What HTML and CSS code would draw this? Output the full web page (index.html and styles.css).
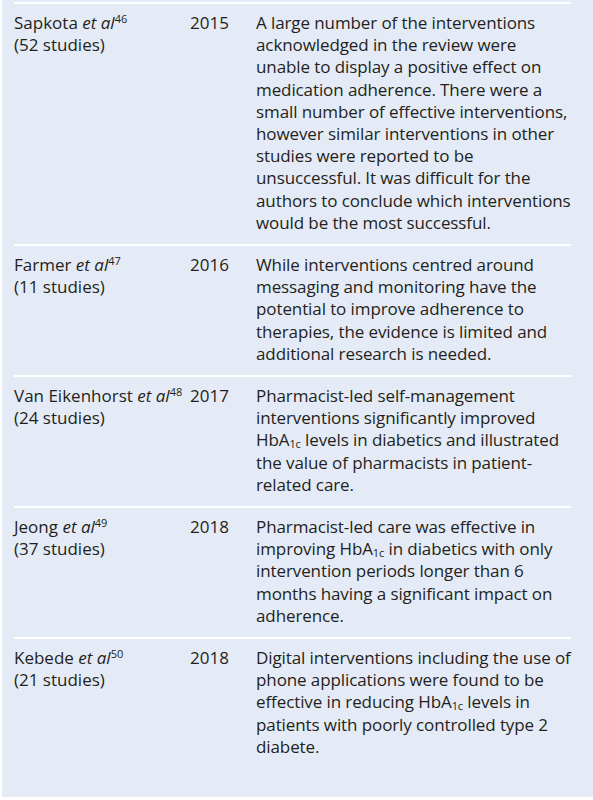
FILE: index.html
```html
<!DOCTYPE html>
<html lang="en">
<head>
    <meta charset="UTF-8">
    <title>Adherence interventions</title>
    <link rel="stylesheet" href="styles.css">
</head>
<body>
    <div class="panel">
        <div class="row">
            <div class="study">Sapkota <i>et al</i><sup>46</sup><br>(52 studies)</div>
            <div class="year">2015</div>
            <div class="finding">A large number of the interventions<br>acknowledged in the review were<br>unable to display a positive effect on<br>medication adherence. There were a<br>small number of effective interventions,<br>however similar interventions in other<br>studies were reported to be<br>unsuccessful. It was difficult for the<br>authors to conclude which interventions<br>would be the most successful.</div>
        </div>
        <div class="row">
            <div class="study">Farmer <i>et al</i><sup>47</sup><br>(11 studies)</div>
            <div class="year">2016</div>
            <div class="finding">While interventions centred around<br>messaging and monitoring have the<br>potential to improve adherence to<br>therapies, the evidence is limited and<br>additional research is needed.</div>
        </div>
        <div class="row">
            <div class="study">Van Eikenhorst <i>et al</i><sup>48</sup><br>(24 studies)</div>
            <div class="year">2017</div>
            <div class="finding">Pharmacist-led self-management<br>interventions significantly improved<br>HbA<sub>1c</sub> levels in diabetics and illustrated<br>the value of pharmacists in patient-<br>related care.</div>
        </div>
        <div class="row">
            <div class="study">Jeong <i>et al</i><sup>49</sup><br>(37 studies)</div>
            <div class="year">2018</div>
            <div class="finding">Pharmacist-led care was effective in<br>improving HbA<sub>1c</sub> in diabetics with only<br>intervention periods longer than 6<br>months having a significant impact on<br>adherence.</div>
        </div>
        <div class="row last">
            <div class="study">Kebede <i>et al</i><sup>50</sup><br>(21 studies)</div>
            <div class="year">2018</div>
            <div class="finding">Digital interventions including the use of<br>phone applications were found to be<br>effective in reducing HbA<sub>1c</sub> levels in<br>patients with poorly controlled type 2<br>diabete.</div>
        </div>
    </div>
</body>
</html>
```

FILE: styles.css
```css
/* Tabelle im Kasten */

body {
    margin: 0;
    background-color: #fff;
    font-family: "Open Sans", sans-serif;
    color: #231f20;
}

.panel {
    margin-left: 2px;
    width: 575px;
    height: 795px;
    padding: 2px 12px 0 12px;
    background-color: #e5ebf6;
    box-sizing: content-box;
    overflow: hidden;
}

.row {
    display: grid;
    grid-template-columns: 176px 66px 1fr;
    border-top: 2px solid #fff;
    padding: 8px 0 10px 0;
    font-size: 17px;
    line-height: 22.2px;
    width: 557px;
}

.study, .year, .finding {
    white-space: nowrap;
}

.finding {
    letter-spacing: -0.1px;
}

sup, sub {
    font-size: 11px;
    line-height: 0;
}

sup {
    vertical-align: 6px;
}

sub {
    vertical-align: -2px;
}
```
